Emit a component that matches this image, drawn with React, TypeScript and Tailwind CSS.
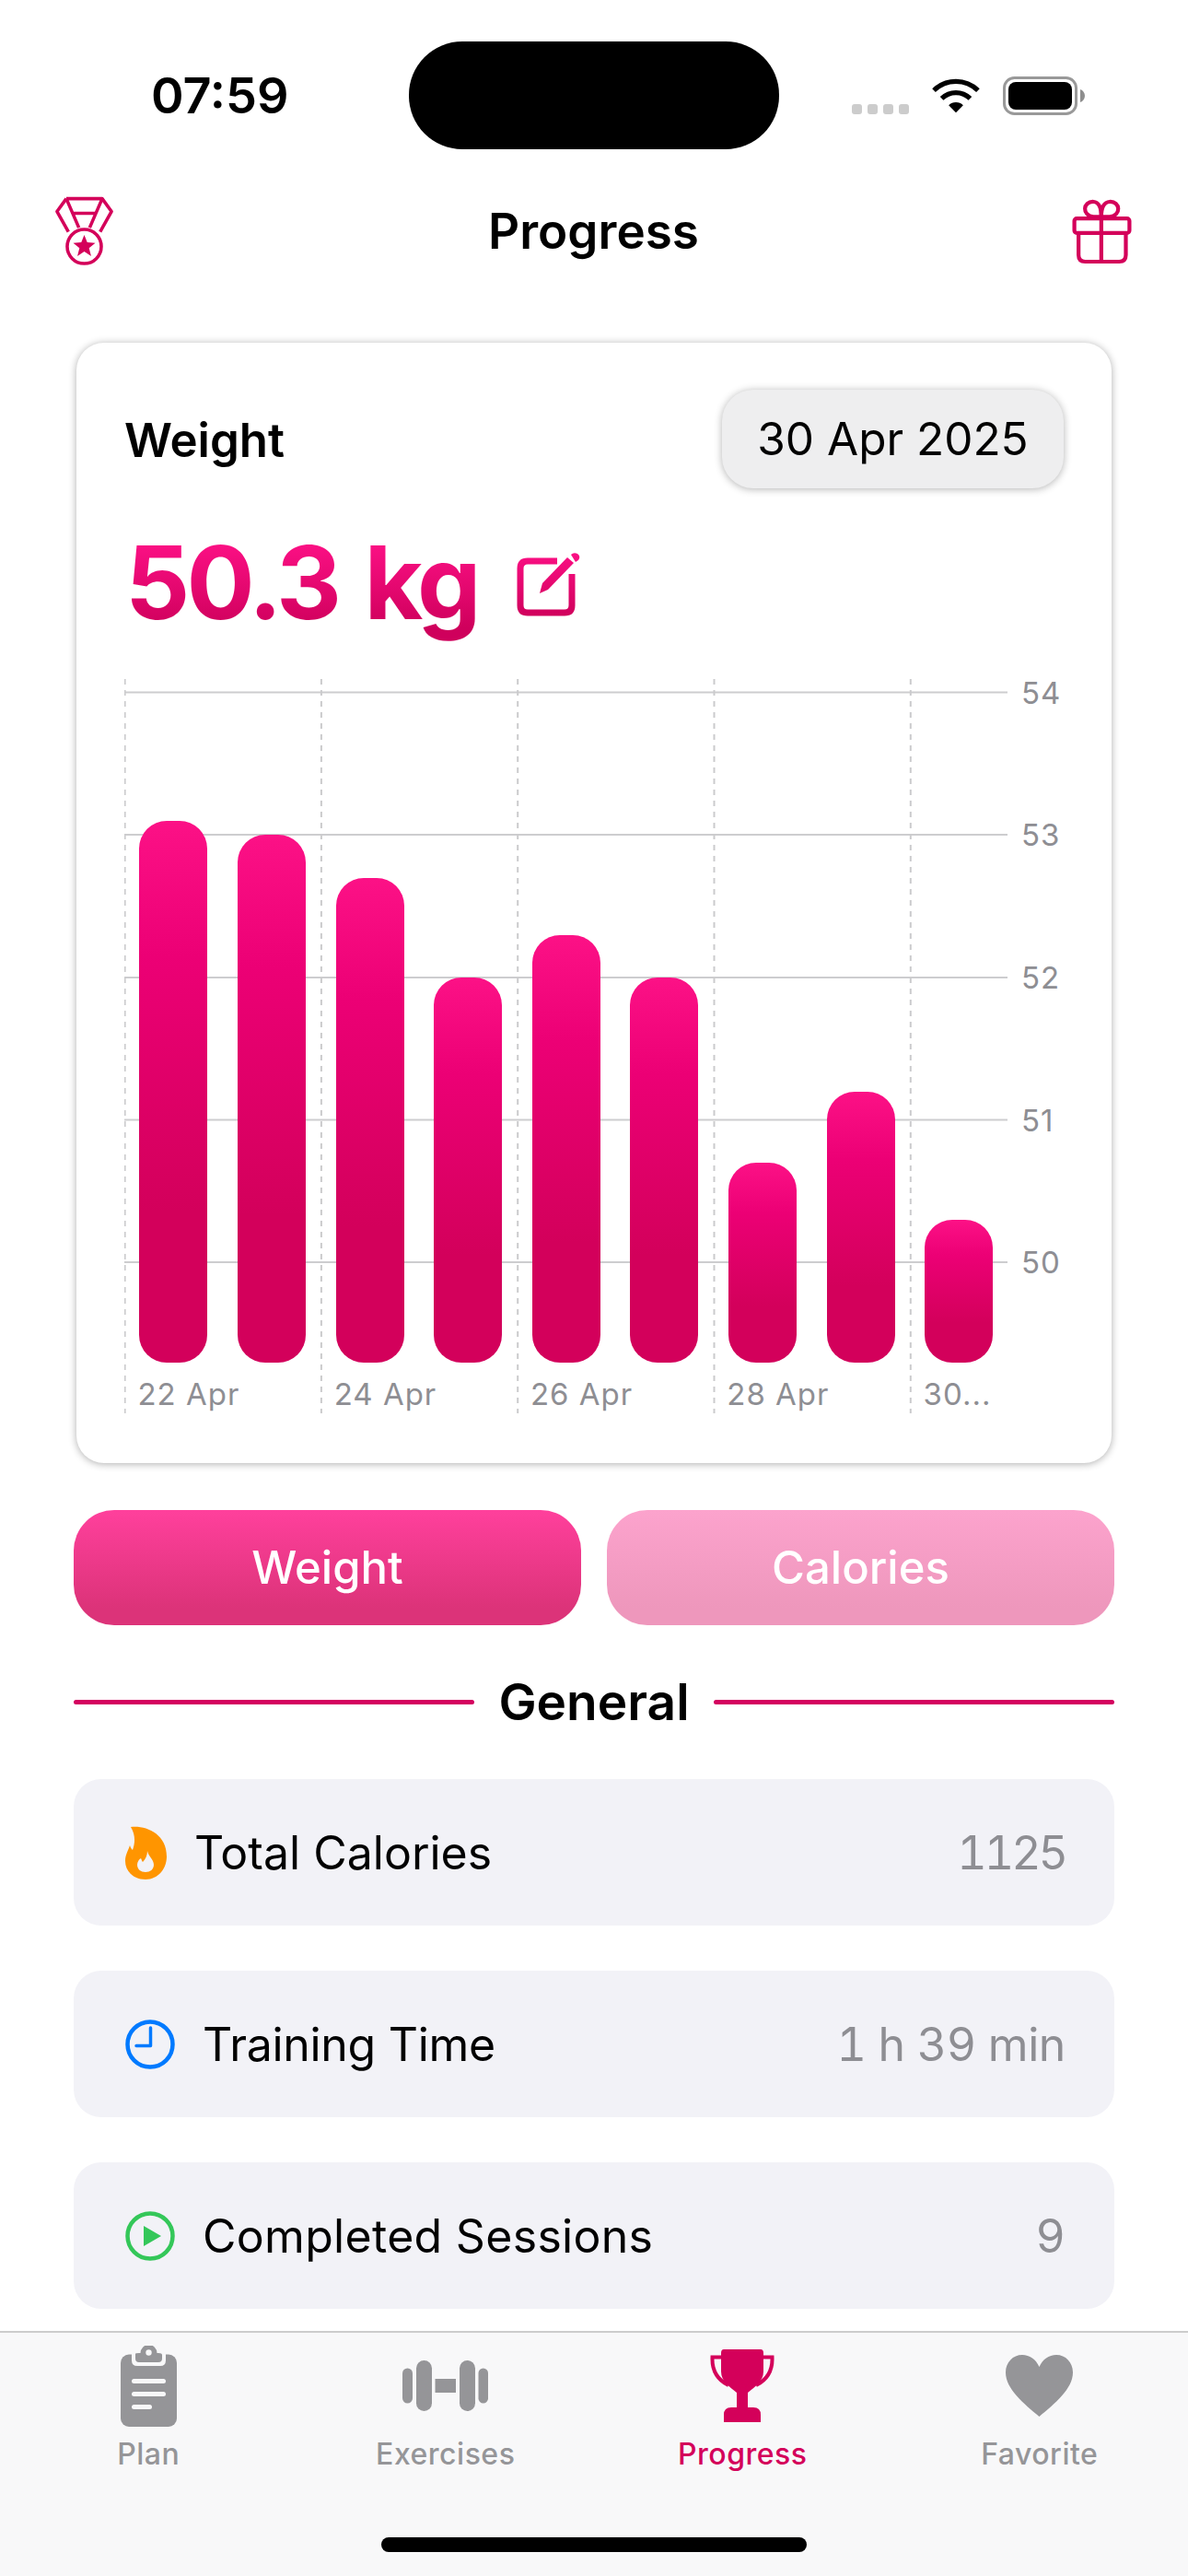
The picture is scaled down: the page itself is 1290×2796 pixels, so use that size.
const PINK = "#d4005a";
const GRAY = "#959598";
const bars = [53.1, 53.0, 52.7, 52.0, 52.3, 52.0, 50.7, 51.2, 50.3];
const gridY = [14.5, 169, 324, 478.5, 633];
const dashX = [0.6, 213.9, 427.2, 640.5, 853.8];

function Medal() {
  return (
    <svg width="63" height="76" viewBox="88 66 194 232" fill="none" stroke={PINK} strokeWidth="11" strokeLinejoin="round">
      <path d="M125 73H245L276 116L238 184M125 73L94 116L132 184M125 73L167 170M245 73L203 170M146 122H224" />
      <circle cx="185" cy="233" r="57" />
      <path d="M185 194L195 219L222 221L201 238L208 265L185 250L162 265L169 238L148 221L175 219Z" fill={PINK} stroke="none" />
    </svg>
  );
}

function Gift() {
  return (
    <svg width="65" height="71" viewBox="790 466 200 216" fill="none" stroke={PINK} strokeWidth="13" strokeLinejoin="round">
      <rect x="798" y="530" width="184" height="48" rx="8" />
      <path d="M812 578V652Q812 674 834 674H948Q970 674 970 652V578M888 495V674" />
      <path d="M888 524H862C822 520 826 472 862 474C878 475 888 490 888 524C888 490 900 475 916 474C952 472 956 520 916 524H888" />
    </svg>
  );
}

function Wifi() {
  return (
    <svg width="54" height="40" viewBox="332 70 164 122" fill="none" stroke="#000" strokeWidth="16">
      <path d="M341 116A104 104 0 0 1 487 116" />
      <path d="M367 143A67 67 0 0 1 461 143" />
      <path d="M414 190L390 165A34 34 0 0 1 438 165Z" fill="#000" stroke="none" />
    </svg>
  );
}

function Battery() {
  return (
    <svg width="89" height="42" viewBox="0 0 89 42">
      <rect x="1.5" y="1.5" width="78" height="39" rx="11" fill="none" stroke="#999999" strokeWidth="3" />
      <rect x="6" y="6" width="69" height="30" rx="8" fill="#000" />
      <path d="M84 14C87 15 89 18 89 21C89 24 87 27 84 28Z" fill="#8e8e8e" />
    </svg>
  );
}

function EditIcon() {
  return (
    <svg width="70" height="70" viewBox="0 0 70 70" fill="none">
      <defs>
        <linearGradient id="editGrad" gradientUnits="userSpaceOnUse" x1="0" y1="0" x2="0" y2="70">
          <stop offset="0" stopColor="#fb1084" />
          <stop offset="1" stopColor="#d0005c" />
        </linearGradient>
      </defs>
      <path d="M44 10H12Q4 10 4 18V58Q4 66 12 66H52Q60 66 60 58V24" stroke="url(#editGrad)" strokeWidth="7" />
      <path d="M25 45L28 34L55 6L62 12L34 41Z" fill="url(#editGrad)" />
      <path d="M59 3Q62 0 66 2Q70 5 67 9L64 11Z" fill="url(#editGrad)" />
    </svg>
  );
}

function Flame() {
  return (
    <svg width="45" height="58" viewBox="0 0 45 58">
      <path d="M6 1C22 -1 45 8 45 33C45 47 35 58 22 58C9 58 0 49 0 38C0 31 3 27 5 21C6 24 7 25 8 26C11 18 11 9 6 1Z" fill="#ff9500" />
      <path d="M24 27C25 33 31 36 31 42C31 47 27 50 22 50C17 50 13 47 13 42C13 39 15 36 17 35C18 37 18 38 19 39C22 36 24 32 24 27Z" fill="#f2f2f7" />
    </svg>
  );
}

function Clock() {
  return (
    <svg width="54" height="54" viewBox="0 0 54 54" fill="none" stroke="#007aff">
      <circle cx="27" cy="27" r="24.5" strokeWidth="4.5" />
      <path d="M27.5 9V28.5H12" strokeWidth="3.5" strokeLinecap="round" strokeLinejoin="round" />
    </svg>
  );
}

function Play() {
  return (
    <svg width="54" height="54" viewBox="0 0 54 54" fill="none">
      <circle cx="27" cy="27" r="24.5" stroke="#34c759" strokeWidth="4.5" />
      <path d="M20 16L39 27L20 38Z" fill="#34c759" />
    </svg>
  );
}

function Plan() {
  return (
    <svg width="61" height="88" viewBox="0 0 61 88">
      <rect x="0" y="9.5" width="61" height="78.5" rx="9" fill={GRAY} />
      <path d="M12 6H49V16Q49 22 43 22H18Q12 22 12 16Z" fill="#f8f8f9" />
      <path d="M16 9Q16 8 20 8H21.5A9 9 0 0 1 39.5 8H41Q45 8 45 10V14Q45 18 41 18H20Q16 18 16 14Z" fill={GRAY} />
      <circle cx="30.5" cy="7.5" r="3.2" fill="#f8f8f9" />
      <rect x="12" y="36" width="37" height="5" rx="2.5" fill="#f8f8f9" />
      <rect x="12" y="50" width="37" height="5" rx="2.5" fill="#f8f8f9" />
      <rect x="12" y="64" width="22" height="5" rx="2.5" fill="#f8f8f9" />
    </svg>
  );
}

function Dumbbell() {
  return (
    <svg width="93" height="55" viewBox="0 0 93 55" fill={GRAY}>
      <rect x="0" y="8.5" width="11" height="38" rx="5.5" />
      <rect x="15" y="0" width="17" height="55" rx="8.5" />
      <rect x="35.5" y="20" width="22.5" height="15" />
      <rect x="62" y="0" width="17" height="55" rx="8.5" />
      <rect x="82.5" y="8.5" width="10.5" height="38" rx="5.25" />
    </svg>
  );
}

function Trophy() {
  return (
    <svg width="70" height="79" viewBox="0 0 70 79" fill="none">
      <path d="M13 8.5H2.5C2 21 6 32 20 39M57 8.5H67.5C68 21 64 32 50 39" stroke={PINK} strokeWidth="4" />
      <path d="M15 0H55Q58 0 58 4V24C58 35 48 41 41 47V63H47Q55 63 55 71V79H15V71Q15 63 23 63H29V47C22 41 12 35 12 24V4Q12 0 15 0Z" fill={PINK} />
    </svg>
  );
}

function Heart() {
  return (
    <svg width="73" height="67" viewBox="0 0 73 67" fill={GRAY}>
      <path d="M36.5 67C20 53 0 37 0 19C0 8 8 0 18 0C26 0 33 5 36.5 13C40 5 47 0 55 0C65 0 73 8 73 19C73 37 53 53 36.5 67Z" />
    </svg>
  );
}

function StatRow({ icon, label, value, track, valueTrack }: { icon: React.ReactNode; label: string; value: string; track?: string; valueTrack?: string }) {
  return (
    <div className="flex h-[159px] items-center justify-between rounded-[30px] bg-[#f2f2f7] pl-[56px] pr-[53px]">
      <div className="flex items-center gap-[30px]">
        {icon}
        <span className={`text-[50px] leading-[60px] text-black ${track ?? ""}`}>{label}</span>
      </div>
      <span className={`text-[50px] leading-[60px] text-[#8e8e93] tabular-nums ${valueTrack ?? ""}`}>{value}</span>
    </div>
  );
}

function Tab({ icon, label, active }: { icon: React.ReactNode; label: string; active?: boolean }) {
  return (
    <div className="flex flex-col items-center">
      <div className="flex h-[99px] items-center justify-center">{icon}</div>
      <span className={`mt-[7px] text-[32px] leading-[36px] font-medium tracking-[0.5px] ${active ? "text-[#d4005a]" : "text-[#959598]"}`}>{label}</span>
    </div>
  );
}

export default function App() {
  return (
    <div className="relative flex h-[2796px] w-[1290px] flex-col overflow-hidden bg-white font-['Inter',sans-serif]">
      {/* status bar */}
      <div className="flex h-[201px] flex-none items-start pt-[45px]">
        <div className="w-[444px] pl-[164px] pt-[28px] text-[54px] leading-[62px] font-semibold text-black">07:59</div>
        <div className="h-[117px] w-[402px] rounded-[58px] bg-black" />
        <div className="flex items-start pl-[79px] pt-[38px]">
          <div className="mt-[30px] flex gap-[6.5px]">
            <div className="h-[11px] w-[10.5px] rounded-[3px] bg-[#cccccc]" />
            <div className="h-[11px] w-[10.5px] rounded-[3px] bg-[#cccccc]" />
            <div className="h-[11px] w-[10.5px] rounded-[3px] bg-[#cccccc]" />
            <div className="h-[11px] w-[10.5px] rounded-[3px] bg-[#cccccc]" />
          </div>
          <div className="ml-[24px]"><Wifi /></div>
          <div className="ml-[24px]"><Battery /></div>
        </div>
      </div>

      {/* nav */}
      <div className="grid h-[100px] flex-none grid-cols-[1fr_auto_1fr] items-center pl-[60px] pr-[61px]">
        <div className="justify-self-start"><Medal /></div>
        <div className="text-[53px] leading-[60px] font-semibold text-black">Progress</div>
        <div className="justify-self-end"><Gift /></div>
      </div>

      {/* content */}
      <div className="flex-1 overflow-hidden px-[80px] pt-[71px]">
        <div className="mx-[3px] h-[1216px] rounded-[30px] bg-white pl-[52px] pr-[52px] pt-[51px] shadow-[0_1px_9px_rgba(0,0,0,0.32)]">
          <div className="flex h-[107px] items-center justify-between">
            <span className="mt-[2px] text-[51px] leading-[60px] font-semibold text-black">Weight</span>
            <div className="flex h-[107px] w-[371px] items-center justify-center rounded-[34px] bg-[#eeeeef] text-[49.5px] text-black shadow-[0_1px_8px_rgba(0,0,0,0.3)]">30 Apr 2025</div>
          </div>
          <div className="mt-[37px] flex h-[130px] items-center">
            <span className="bg-[linear-gradient(180deg,#fb1084_18%,#cf005c_88%)] bg-clip-text pl-[1px] text-[110px] leading-[130px] font-bold tracking-[-3.8px] text-transparent [word-spacing:6px]">50.3 kg</span>
            <div className="ml-[42px] mt-[4px]"><EditIcon /></div>
          </div>
          {/* chart */}
          <div className="relative mt-[40px] h-[797px]">
            <svg className="absolute left-0 top-0" width="965" height="797" viewBox="0 0 965 797" fill="none">
              {gridY.map((y) => (
                <line key={y} x1="0" x2="959" y1={y} y2={y} stroke="#cdcdcf" strokeWidth="2" />
              ))}
              {dashX.map((x) => (
                <line key={x} x1={x} x2={x} y1="0" y2="797" stroke="#cbcbcd" strokeWidth="2" strokeDasharray="6 6" />
              ))}
            </svg>
            {["54", "53", "52", "51", "50"].map((t, i) => (
              <span key={t} className="absolute left-[974px] -translate-y-1/2 text-[33px] leading-[40px] tracking-[1px] text-[#8e8e93]" style={{ top: gridY[i] }}>{t}</span>
            ))}
            <div className="relative flex h-[742px] items-end gap-[32.6px] pl-[16.4px]">
              {bars.map((v, i) => (
                <div key={i} className="w-[74px] rounded-[30px] bg-[linear-gradient(180deg,#fc1186_0%,#ec0075_25%,#d3005b_72%,#d3005b_100%)]" style={{ height: (v - 49.3) * 154.75 }} />
              ))}
            </div>
            <div className="mt-[14px] flex">
              {["22 Apr", "24 Apr", "26 Apr", "28 Apr", "30..."].map((t) => (
                <span key={t} className="w-[213.3px] flex-none pl-[14.4px] text-[33px] leading-[40px] tracking-[1px] text-[#8e8e93]">{t}</span>
              ))}
            </div>
          </div>
        </div>

        {/* toggle */}
        <div className="mt-[51px] flex gap-[28px]">
          <div className="flex h-[125px] flex-1 items-center justify-center rounded-[44px] bg-[linear-gradient(180deg,#ff409c_0%,#dc3379_85%)] text-[49px] font-medium text-white">Weight</div>
          <div className="flex h-[125px] flex-1 items-center justify-center rounded-[44px] bg-[linear-gradient(180deg,#fca3cd_0%,#ee97bc_85%)] text-[49px] font-medium text-white">Calories</div>
        </div>

        {/* section */}
        <div className="mt-[48px] flex h-[70px] items-center">
          <div className="h-[5px] flex-1 rounded-full bg-[#d4005f]" />
          <span className="mx-[26px] text-[55px] leading-[70px] font-semibold text-black">General</span>
          <div className="h-[5px] flex-1 rounded-full bg-[#d4005f]" />
        </div>

        <div className="mt-[49px] flex flex-col gap-[49px]">
          <StatRow icon={<Flame />} label="Total Calories" value="1125" valueTrack="tracking-[-3px]" />
          <StatRow icon={<Clock />} label="Training Time" value="1 h 39 min" track="tracking-[-0.3px]" valueTrack="tracking-[-0.4px]" />
          <StatRow icon={<Play />} label="Completed Sessions" value="9" track="tracking-[0.3px]" />
        </div>
      </div>

      {/* tab bar */}
      <div className="flex h-[266px] flex-none flex-col border-t-2 border-[#cccccc] bg-[#f8f8f9] pt-[8px]">
        <div className="grid grid-cols-4">
          <Tab icon={<Plan />} label="Plan" />
          <Tab icon={<Dumbbell />} label="Exercises" />
          <Tab icon={<Trophy />} label="Progress" active />
          <Tab icon={<Heart />} label="Favorite" />
        </div>
        <div className="mx-auto mt-[72px] h-[16px] w-[462px] rounded-full bg-black" />
      </div>
    </div>
  );
}
